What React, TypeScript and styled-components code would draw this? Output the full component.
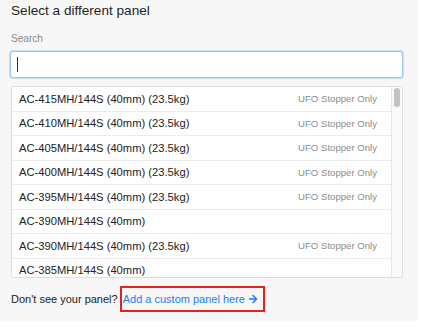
import React from 'react';
import styled, { createGlobalStyle } from 'styled-components';
import { ArrowRight } from 'lucide-react';

const GlobalStyle = createGlobalStyle`
  html, body {
    margin: 0;
    padding: 0;
    background: #fff;
  }
  body {
    font-family: 'Liberation Sans', Arial, sans-serif;
    color: #222;
  }
`;

const Panel = styled.div`
  width: 418px;
  height: 321px;
  box-sizing: border-box;
  background: #f7f7f7;
  padding: 2px 15px 0 11px;
  display: flex;
  flex-direction: column;
`;

const Title = styled.h2`
  margin: 0;
  font-size: 13.6px;
  font-weight: 400;
  line-height: 17px;
  color: #1f1f1f;
`;

const Label = styled.label`
  margin-top: 14px;
  font-size: 10.1px;
  line-height: 12px;
  color: #8a8a8a;
`;

const SearchBox = styled.div`
  margin: 6px 0 0 -1px;
  height: 27px;
  box-sizing: border-box;
  background: #fff;
  border: 1px solid #9cc8ef;
  border-radius: 3px;
  box-shadow: 0 0 0 1px rgba(120, 175, 230, 0.35);
  display: flex;
  align-items: center;
  padding-left: 6px;
`;

const Caret = styled.span`
  width: 1px;
  height: 15px;
  background: #333;
`;

const List = styled.div`
  margin-top: 8px;
  height: 192px;
  box-sizing: border-box;
  background: #fff;
  border: 1px solid #dedede;
  border-radius: 2px;
  display: flex;
  overflow: hidden;
`;

const Rows = styled.div`
  flex: 1;
  overflow: hidden;
`;

const Track = styled.div`
  width: 11px;
  box-sizing: border-box;
  background: #fafafa;
  border-left: 1px solid #e6e6e6;
  padding: 1px 0 0 2px;
`;

const Thumb = styled.div`
  width: 6px;
  height: 19px;
  border-radius: 3px;
  background: #c3c3c3;
`;

const Row = styled.div`
  height: 24.5px;
  box-sizing: border-box;
  border-bottom: 1px solid #ececec;
  display: flex;
  align-items: center;
  justify-content: space-between;
  padding: 0 14px 0 7px;
`;

const Model = styled.span`
  font-size: 11.2px;
  color: #222;
`;

const Note = styled.span`
  font-size: 9.6px;
  color: #8c8c8c;
`;

const Footer = styled.div`
  margin-top: 8px;
  display: flex;
  align-items: center;
  font-size: 11px;
  color: #222;
`;

const Highlight = styled.span`
  margin-left: 2px;
  height: 26px;
  box-sizing: border-box;
  border: 2px solid #e3211d;
  display: flex;
  align-items: center;
  padding: 0 4px 0 1px;
`;

const Link = styled.a`
  color: #1a7ef5;
  text-decoration: none;
  display: flex;
  align-items: center;
  gap: 2px;
  cursor: pointer;
`;

const panels: { name: string; note?: string }[] = [
  { name: 'AC-415MH/144S (40mm) (23.5kg)', note: 'UFO Stopper Only' },
  { name: 'AC-410MH/144S (40mm) (23.5kg)', note: 'UFO Stopper Only' },
  { name: 'AC-405MH/144S (40mm) (23.5kg)', note: 'UFO Stopper Only' },
  { name: 'AC-400MH/144S (40mm) (23.5kg)', note: 'UFO Stopper Only' },
  { name: 'AC-395MH/144S (40mm) (23.5kg)', note: 'UFO Stopper Only' },
  { name: 'AC-390MH/144S (40mm)' },
  { name: 'AC-390MH/144S (40mm) (23.5kg)', note: 'UFO Stopper Only' },
  { name: 'AC-385MH/144S (40mm)' },
];

export default function App() {
  return (
    <>
      <GlobalStyle />
      <Panel>
        <Title>Select a different panel</Title>
        <Label>Search</Label>
        <SearchBox>
          <Caret />
        </SearchBox>
        <List>
          <Rows>
            {panels.map((p, i) => (
              <Row key={i}>
                <Model>{p.name}</Model>
                {p.note && <Note>{p.note}</Note>}
              </Row>
            ))}
          </Rows>
          <Track>
            <Thumb />
          </Track>
        </List>
        <Footer>
          Don't see your panel?
          <Highlight>
            <Link>
              Add a custom panel here
              <ArrowRight size={12} strokeWidth={3} />
            </Link>
          </Highlight>
        </Footer>
      </Panel>
    </>
  );
}
